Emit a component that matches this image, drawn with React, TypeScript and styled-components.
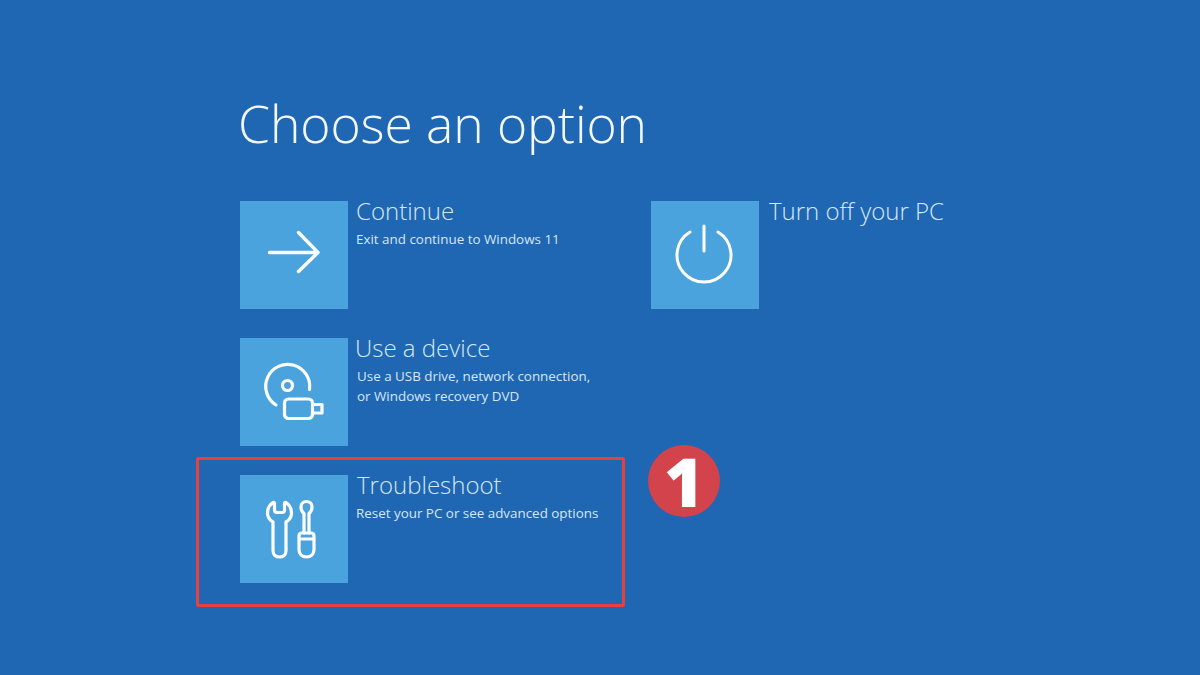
import React from "react";
import styled, { createGlobalStyle } from "styled-components";

const GlobalStyle = createGlobalStyle`
  html, body {
    margin: 0;
    padding: 0;
    background: #1f66b3;
  }
`;

const Screen = styled.div`
  width: 1200px;
  height: 675px;
  overflow: hidden;
  box-sizing: border-box;
  padding: 88px 0 0 239px;
  background: #1f66b3;
  color: #fff;
  font-family: "Open Sans", "Noto Sans", "Liberation Sans", sans-serif;
`;

const Title = styled.h1`
  margin: 0 0 0 -1px;
  height: 73px;
  font-size: 51.6px;
  line-height: 70px;
  font-weight: 300;
  color: #f3f8fd;
  letter-spacing: -0.1px;
`;

const Columns = styled.div`
  display: flex;
  margin-top: 40px;
`;

const Column = styled.div<{ $width: number }>`
  width: ${(p) => p.$width}px;
  display: flex;
  flex-direction: column;
`;

const Option = styled.div<{ $gap?: number }>`
  display: flex;
  align-items: flex-start;
  margin-top: ${(p) => p.$gap ?? 0}px;
`;

const Tile = styled.div`
  width: 108px;
  height: 108px;
  flex: none;
  background: #4ba3dd;
  display: flex;
  align-items: center;
  justify-content: center;
  margin-left: 1px;
`;

const OptionText = styled.div<{ $indent?: number }>`
  margin-left: ${(p) => p.$indent ?? 8}px;
  margin-top: -2px;
  display: flex;
  flex-direction: column;
`;

const OptionTitle = styled.div`
  font-size: 24px;
  line-height: 24px;
  font-weight: 300;
  color: #d6e8f6;
`;

const OptionDesc = styled.div<{ $indent?: number }>`
  margin-top: 7px;
  margin-left: ${(p) => p.$indent ?? 0}px;
  font-size: 13.4px;
  line-height: 19.5px;
  font-weight: 400;
  color: #d6e8f6;
`;

const HighlightRow = styled.div`
  display: flex;
  align-items: flex-start;
  margin: 11px 0 0 -43px;
`;

const Highlight = styled.div`
  box-sizing: border-box;
  width: 429px;
  height: 150px;
  flex: none;
  border: 3px solid #e8403d;
  border-radius: 2px;
  padding: 15px 0 0 40px;
`;

const Badge = styled.div`
  width: 72px;
  height: 72px;
  flex: none;
  margin: -12px 0 0 23px;
  border-radius: 50%;
  background: #d3434b;
  display: flex;
  align-items: center;
  justify-content: center;
  color: #fff;
  font-family: "Open Sans", sans-serif;
  font-size: 68px;
  line-height: 72px;
  font-weight: 800;
`;

const Glyph = styled.svg`
  width: 108px;
  height: 108px;
  fill: none;
  stroke: #fff;
  stroke-linecap: round;
  stroke-linejoin: round;
`;

const ArrowIcon = () => (
  <Glyph viewBox="0 0 108 108" strokeWidth={3.4}>
    <path d="M29.5 51.5H78M58.5 31.5L78 51.5L58.5 70.5" />
  </Glyph>
);

const DeviceIcon = () => (
  <Glyph viewBox="0 0 108 108" strokeWidth={3.2}>
    <path d="M36 67A22 22 0 1 1 69.5 51.5" />
    <circle cx="47.5" cy="47.5" r="5" />
    <rect x="44.5" y="61" width="28" height="19.5" rx="4" />
    <path d="M72.5 66.5H82V75H72.5" />
  </Glyph>
);

const ToolsIcon = () => (
  <Glyph viewBox="0 0 108 108" strokeWidth={3.2}>
    <path d="M33 27.5C29.5 30 27.5 33.5 27.5 38C27.5 42 29.5 45 33 47V75.5C33 79.5 35.5 82 39.5 82C43.5 82 46 79.5 46 75.5V47C49.5 45 51.5 42 51.5 38C51.5 33.5 49.5 30 46 27.5C45 27 44.5 27.5 44.5 28.5V35C44.5 36.5 43.5 37.5 42 37.5H37C35.5 37.5 34.5 36.5 34.5 35V28.5C34.5 27.5 34 27 33 27.5Z" />
    <path d="M64 58V38.5C62 37 61 34.5 61 32C61 28.5 63.5 26.5 66.5 26.5C69.5 26.5 72 28.5 72 32C72 34.5 71 37 69 38.5V58" />
    <path d="M59 61C59 59 60.5 58 62 58H71C72.5 58 74 59 74 61V74.5C74 79 71 82 66.5 82C62 82 59 79 59 74.5ZM59 64H74" />
  </Glyph>
);

const PowerIcon = () => (
  <Glyph viewBox="0 0 108 108" strokeWidth={3}>
    <path d="M39 31A27 27 0 1 0 67 31" />
    <path d="M53 25V50" />
  </Glyph>
);

export default function App() {
  return (
    <>
      <GlobalStyle />
      <Screen>
        <Title>Choose an option</Title>
        <Columns>
          <Column $width={411}>
            <Option>
              <Tile>
                <ArrowIcon />
              </Tile>
              <OptionText>
                <OptionTitle>Continue</OptionTitle>
                <OptionDesc>Exit and continue to Windows 11</OptionDesc>
              </OptionText>
            </Option>
            <Option $gap={29}>
              <Tile>
                <DeviceIcon />
              </Tile>
              <OptionText $indent={7}>
                <OptionTitle>Use a device</OptionTitle>
                <OptionDesc $indent={2}>
                  Use a USB drive, network connection,
                  <br />
                  or Windows recovery DVD
                </OptionDesc>
              </OptionText>
            </Option>
            <HighlightRow>
              <Highlight>
                <Option>
                  <Tile>
                    <ToolsIcon />
                  </Tile>
                  <OptionText $indent={9}>
                    <OptionTitle>Troubleshoot</OptionTitle>
                    <OptionDesc $indent={-1}>Reset your PC or see advanced options</OptionDesc>
                  </OptionText>
                </Option>
              </Highlight>
              <Badge>1</Badge>
            </HighlightRow>
          </Column>
          <Column $width={320}>
            <Option>
              <Tile>
                <PowerIcon />
              </Tile>
              <OptionText $indent={10}>
                <OptionTitle>Turn off your PC</OptionTitle>
              </OptionText>
            </Option>
          </Column>
        </Columns>
      </Screen>
    </>
  );
}
